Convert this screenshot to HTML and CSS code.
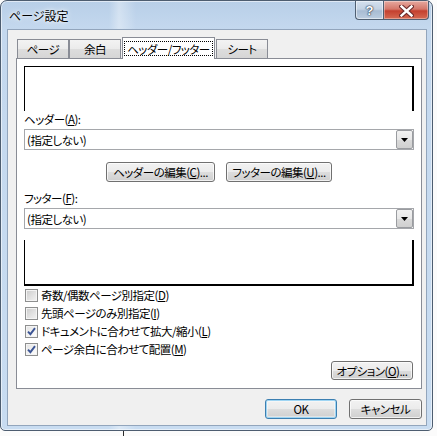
FILE: index.html
```html
<!DOCTYPE html>
<html lang="ja">
<head>
<meta charset="utf-8">
<title>ページ設定</title>
<link rel="stylesheet" href="styles.css">
</head>
<body>
<div class="window">
  <div class="titlebar">
    <span class="title">ページ設定</span>
    <div class="caption">
      <div class="cap-btn help"><span class="q">?</span></div>
      <div class="cap-btn close">
        <svg width="15" height="12" viewBox="0 0 15 12">
          <path d="M2.5 1.5 L12.5 10.5 M12.5 1.5 L2.5 10.5" stroke="#6b2a2a" stroke-width="4.6" stroke-linecap="square" fill="none"/>
          <path d="M2.5 1.5 L12.5 10.5 M12.5 1.5 L2.5 10.5" stroke="#ffffff" stroke-width="2.4" stroke-linecap="square" fill="none"/>
        </svg>
      </div>
    </div>
  </div>
  <div class="client">
    <div class="tabs">
      <div class="tab first">ページ</div>
      <div class="tab">余白</div>
      <div class="tab active"><span class="focus">ヘッダー/フッター</span></div>
      <div class="tab last">シート</div>
    </div>
    <div class="panel">
      <div class="preview preview-top"></div>
      <div class="label">ヘッダー(<u>A</u>):</div>
      <div class="combo">
        <span class="combo-text">(指定しない)</span>
        <span class="drop"><svg width="7" height="4" viewBox="0 0 7 4"><path d="M0 0 H7 L3.5 4 Z" fill="#000"/></svg></span>
      </div>
      <div class="edit-row">
        <button class="btn edit-header">ヘッダーの編集(<u>C</u>)...</button>
        <button class="btn edit-footer">フッターの編集(<u>U</u>)...</button>
      </div>
      <div class="label label-footer">フッター(<u>F</u>):</div>
      <div class="combo">
        <span class="combo-text">(指定しない)</span>
        <span class="drop"><svg width="7" height="4" viewBox="0 0 7 4"><path d="M0 0 H7 L3.5 4 Z" fill="#000"/></svg></span>
      </div>
      <div class="preview preview-bottom"></div>
      <div class="checks">
        <div class="check-row"><span class="cb"></span><span>奇数/偶数ページ別指定(<u>D</u>)</span></div>
        <div class="check-row"><span class="cb"></span><span>先頭ページのみ別指定(<u>I</u>)</span></div>
        <div class="check-row"><span class="cb checked"><svg width="9" height="9" viewBox="0 0 9 9"><path d="M1 4.6 L3.4 7.2 L8 1.2" stroke="#3b5494" stroke-width="1.9" fill="none"/></svg></span><span>ドキュメントに合わせて拡大/縮小(<u>L</u>)</span></div>
        <div class="check-row"><span class="cb checked"><svg width="9" height="9" viewBox="0 0 9 9"><path d="M1 4.6 L3.4 7.2 L8 1.2" stroke="#3b5494" stroke-width="1.9" fill="none"/></svg></span><span>ページ余白に合わせて配置(<u>M</u>)</span></div>
      </div>
      <div class="opt-row">
        <button class="btn options">オプション(<u>O</u>)...</button>
      </div>
    </div>
    <div class="footer">
      <button class="btn ok">OK</button>
      <button class="btn cancel">キャンセル</button>
    </div>
  </div>
</div>
</body>
</html>
```
FILE: styles.css
```css
html, body {
  margin: 0;
  padding: 0;
}
body {
  width: 437px;
  height: 436px;
  background: #fbfbfb linear-gradient(to right, transparent 123px, #2a2a2a 123px, #2a2a2a 124px, transparent 124px);
  font-family: "Noto Sans CJK JP", "Liberation Sans", sans-serif;
  font-size: 11.5px;
  letter-spacing: -0.5px;
  color: #000;
  font-feature-settings: "palt";
  overflow: hidden;
  white-space: nowrap;
}
u { text-decoration: underline; text-underline-offset: 1px; }

.window {
  box-sizing: border-box;
  width: 433px;
  height: 431px;
  border: 1px solid #4d5d70;
  border-radius: 7px 7px 5px 5px;
  padding: 0 5px 4px 6px;
  background:
    linear-gradient(90deg, rgba(255,255,255,0) 0, rgba(255,255,255,0) 108px, rgba(255,255,255,.35) 118px, rgba(255,255,255,0) 135px, rgba(255,255,255,0) 100%),
    linear-gradient(180deg, #b8cfe8 0, #c4d8ee 28px, #c8dcf1 100%);
  box-shadow: inset 0 0 0 1px rgba(255,255,255,.55);
}

.titlebar {
  height: 28px;
  display: flex;
  justify-content: space-between;
  align-items: flex-start;
}
.title {
  padding: 7px 0 0 2px;
  line-height: 16px;
  font-size: 12px;
  letter-spacing: 0;
  text-shadow: 0 0 6px rgba(255,255,255,.95), 0 0 3px rgba(255,255,255,.9);
}
.caption {
  display: flex;
  margin-right: -2px;
}
.cap-btn {
  box-sizing: border-box;
  height: 19px;
  border: 1px solid #4f5f72;
  border-top: none;
  display: flex;
  align-items: center;
  justify-content: center;
}
.help {
  width: 28px;
  border-radius: 0 0 0 4px;
  border-right: none;
  background: linear-gradient(180deg, #d4e0ee 0, #c3d2e3 45%, #a8bcd3 55%, #bccde0 100%);
  box-shadow: inset 0 0 0 1px rgba(255,255,255,.5);
}
.q {
  font-family: "Liberation Sans", sans-serif;
  font-weight: bold;
  font-size: 13px;
  line-height: 13px;
  letter-spacing: 0;
  color: #fff;
  text-shadow: 0 0 1px #2c3d52, 0 0 1px #2c3d52, 0 0 2px #2c3d52;
  padding-top: 1px;
}
.close {
  width: 46px;
  border-radius: 0 0 4px 0;
  background: linear-gradient(180deg, #e6a99f 0, #d4776a 45%, #c4402f 55%, #d56a52 100%);
  box-shadow: inset 0 0 0 1px rgba(255,255,255,.35);
}
.close svg { margin-top: 2px; }

.client {
  box-sizing: border-box;
  width: 420px;
  height: 397px;
  border: 1px solid #92a5bc;
  background: #f0f0f0;
}

.tabs {
  display: flex;
  align-items: flex-end;
  height: 21px;
  margin-top: 7px;
  padding-left: 8px;
}
.tab {
  box-sizing: border-box;
  width: 52px;
  height: 19px;
  border: 1px solid #898c95;
  border-bottom: none;
  background: linear-gradient(180deg, #f3f3f3 0, #ebebeb 50%, #dddddd 51%, #d6d6d6 100%);
  text-align: center;
  line-height: 18px;
}
.tab.first { margin-left: 1px; }
.tab.active {
  position: relative;
  z-index: 1;
  width: 93px;
  height: 22px;
  margin: 0 1px -1px 1px;
  background: #fff;
  display: flex;
  justify-content: center;
  align-items: flex-start;
}
.focus {
  margin-top: 3px;
  padding: 0 2px;
  height: 15px;
  line-height: 14px;
  box-sizing: border-box;
  border: 1px dotted #000;
}

.panel {
  box-sizing: border-box;
  width: 406px;
  height: 331px;
  margin-left: 8px;
  border: 1px solid #898c95;
  background: #fff;
}

.preview {
  box-sizing: border-box;
  width: 390px;
  margin-left: 7px;
  border-left: 1px solid #000;
  border-right: 2px solid #000;
}
.preview-top {
  margin-top: 7px;
  height: 45px;
  border-top: 1px solid #000;
}
.preview-bottom {
  margin-top: 11px;
  height: 46px;
  border-bottom: 2px solid #000;
}

.label {
  margin-left: 7px;
  height: 16px;
  line-height: 16px;
  margin-bottom: 2px;
}
.label-footer { margin-top: 8px; }

.combo {
  box-sizing: border-box;
  width: 390px;
  height: 21px;
  margin-left: 7px;
  border: 1px solid #a5a7ab;
  display: flex;
  align-items: center;
  background: #fff;
}
.combo-text {
  padding-left: 2px;
  line-height: 16px;
}
.drop {
  box-sizing: border-box;
  margin-left: auto;
  width: 17px;
  height: 19px;
  border: 1px solid #9a9ca0;
  border-radius: 2px;
  background: linear-gradient(180deg, #f2f2f2 0, #e8e8e8 50%, #dadada 51%, #d0d0d0 100%);
  display: flex;
  align-items: center;
  justify-content: center;
}

.btn {
  box-sizing: border-box;
  margin: 0;
  padding: 0;
  font: inherit;
  letter-spacing: inherit;
  font-feature-settings: inherit;
  white-space: nowrap;
  color: #000;
  border: 1px solid #707070;
  border-radius: 3px;
  background: linear-gradient(180deg, #f2f2f2 0, #ebebeb 50%, #dddddd 51%, #cfcfcf 100%);
  box-shadow: inset 0 0 0 1px rgba(255,255,255,.7);
  line-height: 16px;
  text-align: center;
}

.edit-row {
  display: flex;
  justify-content: center;
  gap: 11px;
  margin-top: 12px;
}
.edit-header { width: 109px; height: 20px; }
.edit-footer { width: 106px; height: 20px; }

.checks {
  margin-left: 8px;
}
.check-row {
  height: 18px;
  display: flex;
  align-items: center;
  gap: 3px;
}
.cb {
  box-sizing: border-box;
  width: 13px;
  height: 13px;
  border: 1px solid #8e8f8f;
  background: linear-gradient(135deg, #cbcbcb 0, #e4e4e4 60%, #f2f2f2 100%);
  box-shadow: inset 0 0 0 1px #f4f4f4;
  display: flex;
  align-items: center;
  justify-content: center;
}
.cb.checked {
  background: linear-gradient(135deg, #e2e2e2 0, #f4f4f4 60%, #ffffff 100%);
}

.opt-row {
  display: flex;
  justify-content: flex-end;
  padding-right: 8px;
  margin-top: 3px;
}
.options { width: 82px; height: 19px; }

.footer {
  display: flex;
  justify-content: flex-end;
  gap: 12px;
  margin-top: 10px;
  padding-right: 4px;
}
.ok, .cancel { height: 20px; line-height: 17px; }
.ok {
  width: 72px;
  border-color: #3c7fb1;
  box-shadow: inset 0 0 0 1px #9fd5f3, inset 0 0 0 2px rgba(255,255,255,.4);
}
.cancel { width: 73px; }
```
